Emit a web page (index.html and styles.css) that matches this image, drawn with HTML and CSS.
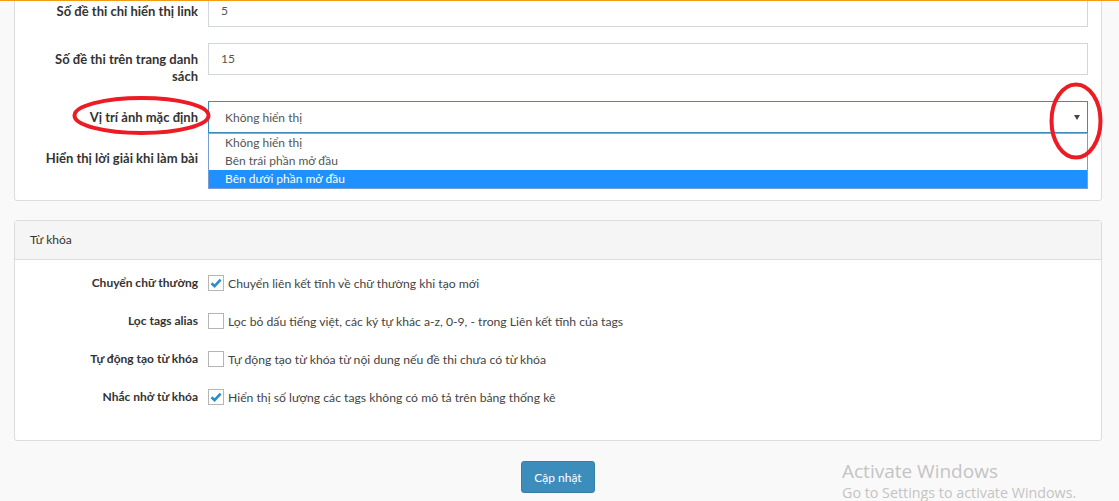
FILE: index.html
```html
<!DOCTYPE html>
<html lang="vi">
<head>
<meta charset="utf-8">
<title>Cấu hình</title>
<link rel="stylesheet" href="styles.css">
</head>
<body>
<div class="topline"></div>
<div class="content">
  <div class="panel panel-first">
    <div class="panel-body">
      <div class="form-row">
        <label class="row-label">Số đề thi chỉ hiển thị link</label>
        <div class="control"><div class="input">5</div></div>
      </div>
      <div class="form-row">
        <label class="row-label">Số đề thi trên trang danh sách</label>
        <div class="control"><div class="input">15</div></div>
      </div>
      <div class="form-row">
        <label class="row-label">Vị trí ảnh mặc định</label>
        <div class="control select-wrap">
          <div class="select">Không hiển thị<span class="arrow"></span></div>
          <ul class="dropdown">
            <li>Không hiển thị</li>
            <li>Bên trái phần mở đầu</li>
            <li class="active">Bên dưới phần mở đầu</li>
          </ul>
        </div>
      </div>
      <div class="form-row row-check">
        <label class="row-label">Hiển thị lời giải khi làm bài</label>
        <div class="control"></div>
      </div>
    </div>
  </div>

  <div class="panel panel-second">
    <div class="panel-heading">Từ khóa</div>
    <div class="panel-body body-checks">
      <div class="form-row row-check">
        <label class="row-label">Chuyển chữ thường</label>
        <div class="control check-line"><span class="cb checked"><svg viewBox="0 0 14 14" width="14" height="14"><path d="M2.5 7.2 L5.6 10.2 L11.6 3.6" fill="none" stroke="#2a8ccb" stroke-width="2.6"/></svg></span>Chuyển liên kết tĩnh về chữ thường khi tạo mới</div>
      </div>
      <div class="form-row row-check">
        <label class="row-label">Lọc tags alias</label>
        <div class="control check-line"><span class="cb"></span>Lọc bỏ dấu tiếng việt, các ký tự khác a-z, 0-9, - trong Liên kết tĩnh của tags</div>
      </div>
      <div class="form-row row-check">
        <label class="row-label">Tự động tạo từ khóa</label>
        <div class="control check-line"><span class="cb"></span>Tự động tạo từ khóa từ nội dung nếu đề thi chưa có từ khóa</div>
      </div>
      <div class="form-row row-check">
        <label class="row-label">Nhắc nhở từ khóa</label>
        <div class="control check-line"><span class="cb checked"><svg viewBox="0 0 14 14" width="14" height="14"><path d="M2.5 7.2 L5.6 10.2 L11.6 3.6" fill="none" stroke="#2a8ccb" stroke-width="2.6"/></svg></span>Hiển thị số lượng các tags không có mô tả trên bảng thống kê</div>
      </div>
    </div>
  </div>

  <div class="actions">
    <button class="btn-primary" type="button">Cập nhật</button>
  </div>
</div>

<svg class="annot" width="1119" height="501" viewBox="0 0 1119 501">
  <ellipse cx="141.5" cy="115.5" rx="67" ry="17.5" fill="none" stroke="#ed1c24" stroke-width="4"/>
  <ellipse cx="1076" cy="121" rx="24.5" ry="36.5" fill="none" stroke="#ed1c24" stroke-width="4"/>
</svg>

<div class="watermark">
  <div class="wm-title">Activate Windows</div>
  <div class="wm-sub">Go to Settings to activate Windows.</div>
</div>
</body>
</html>
```

FILE: styles.css
```css
html, body {
  margin: 0;
  padding: 0;
  height: 100%;
  overflow: hidden;
}
body {
  background: #f9f9f9;
  font-family: Lato, "Noto Sans", sans-serif;
  font-size: 12px;
  color: #333;
  position: relative;
}
.topline {
  height: 1px;
  background: #f39c12;
  position: relative;
  z-index: 2;
}
.content {
  padding: 0 17px 0 14px;
}
.panel {
  background: #fff;
  border: 1px solid #dcdcdc;
  border-radius: 3px;
}
.panel-first {
  margin-top: -40px;
  border-top-left-radius: 0;
  border-top-right-radius: 0;
}
.panel-body {
  padding: 33px 13px 15px 0;
}
.form-row {
  display: grid;
  grid-template-columns: 183px 1fr;
  column-gap: 10px;
  margin-bottom: 16px;
}
.row-label {
  text-align: right;
  font-weight: bold;
  font-size: 13px;
  line-height: 17px;
  padding-top: 8px;
  padding-left: 20px;
  color: #333;
}
.input {
  height: 30px;
  border: 1px solid #d2d6de;
  padding: 0 12px;
  line-height: 30px;
  color: #555;
  background: #fff;
}
.select-wrap {
  position: relative;
}
.select {
  height: 30px;
  border: 1px solid #3c8dbc;
  padding: 0 16px;
  line-height: 31px;
  color: #555;
  position: relative;
}
.arrow {
  position: absolute;
  right: 7px;
  top: 13px;
  width: 0;
  height: 0;
  border-left: 3.5px solid transparent;
  border-right: 3.5px solid transparent;
  border-top: 5px solid #444;
}
.dropdown {
  position: absolute;
  left: 0;
  right: 0;
  top: 100%;
  margin: 0;
  padding: 0;
  list-style: none;
  background: #fff;
  border: 1px solid #7a9cd3;
  border-top-color: #8aa7d6;
  z-index: 3;
}
.dropdown li {
  height: 18px;
  line-height: 18px;
  padding: 0 16px;
  color: #555;
}
.dropdown li.active {
  background: #1e90ff;
  color: #fff;
}
.row-check .row-label {
  padding-top: 0;
  line-height: 18px;
}
.panel-first .row-check .control {
  height: 20px;
}
.panel-second {
  margin-top: 19px;
}
.panel-heading {
  background: #f5f5f5;
  border-bottom: 1px solid #dcdcdc;
  padding: 0 15px;
  height: 38px;
  line-height: 38px;
  color: #333;
}
.body-checks {
  padding-top: 13px;
  padding-bottom: 15px;
}
.body-checks .form-row {
  margin-bottom: 18px;
  align-items: center;
}
.body-checks .row-label {
  line-height: 20px;
  font-size: 12px;
}
.check-line {
  display: flex;
  align-items: center;
  height: 20px;
  color: #444;
  font-size: 12.2px;
}
.cb {
  box-sizing: border-box;
  width: 16px;
  height: 16px;
  border: 1px solid #b5b5b5;
  background: #fff;
  margin-right: 4px;
  display: inline-flex;
  align-items: center;
  justify-content: center;
  flex: none;
}
.actions {
  display: flex;
  justify-content: center;
  padding-top: 20px;
}
.btn-primary {
  background: #3c8dbc;
  border: 1px solid #367fa9;
  color: #fff;
  border-radius: 3px;
  width: 74px;
  height: 32px;
  font-family: Lato, "Noto Sans", sans-serif;
  font-size: 12px;
  padding: 0;
}
.annot {
  position: absolute;
  left: 0;
  top: 0;
  pointer-events: none;
  z-index: 5;
}
.watermark {
  position: absolute;
  left: 842px;
  top: 458px;
  color: #c4c4c4;
  font-family: "Open Sans", "Noto Sans", sans-serif;
  z-index: 6;
  white-space: nowrap;
}
.wm-title {
  font-size: 19px;
  line-height: 26px;
}
.wm-sub {
  font-size: 14.3px;
  line-height: 18px;
}
```
